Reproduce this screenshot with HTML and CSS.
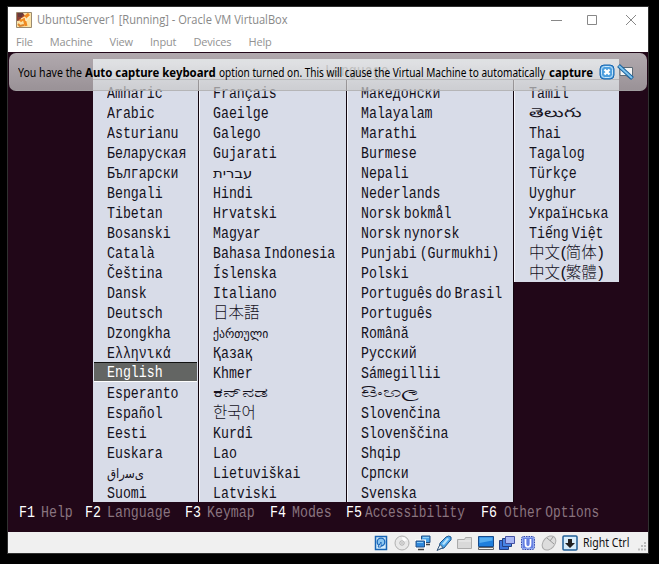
FILE: index.html
```
<!DOCTYPE html>
<html lang="en">
<head>
<meta charset="utf-8">
<title>UbuntuServer1 [Running] - Oracle VM VirtualBox</title>
<link rel="stylesheet" href="styles.css">
</head>
<body>
<div class="window">
  <header class="titlebar">
    <svg class="app-icon" width="16" height="16" viewBox="0 0 16 16"><path d="M.5.5h15v15H.5z" fill="#fbe3a8" stroke="#9a8a70"/><path d="M1 1h6l2 3-3 4-5 1z" fill="#8c3f35"/><path d="M2 2h5M2 4h4" stroke="#413943"/><path d="M4 9l4-3 5-4M8 6l2 8" stroke="#f08a20" stroke-width="3" fill="none"/><path d="M5 7l4-2 1 4 4-5" stroke="#fff3cf" fill="none"/><path d="M2 12l2 2 4-1" stroke="#d9822b" stroke-width="2" fill="none"/></svg>
    <span class="title">UbuntuServer1 [Running] - Oracle VM VirtualBox</span>
    <svg class="controls" width="86" height="12" viewBox="0 0 86 12"><path d="M0 6.500h11M36.500 1.500h9v9h-9zM75 1l10 10M85 1L75 11" fill="none" stroke="#888"/></svg>
  </header>
  <nav class="menubar"><span>File</span><span>Machine</span><span>View</span><span>Input</span><span>Devices</span><span>Help</span></nav>
  <main class="screen">
    <div class="banner">
      <p class="message"><span class="m1">You have the</span><b class="m2">Auto capture keyboard</b><span class="m3">option turned on. This will cause the Virtual Machine to automatically</span><b class="m4">capture</b></p>
      <svg class="banner-icons" width="36" height="18" viewBox="0 0 36 18"><rect x="1" y="2" width="14" height="14" rx="4" fill="#4d9fdf" stroke="#1764af"/><rect x="2.500" y="3.500" width="11" height="11" rx="3" fill="none" stroke="#c9e7fb"/><path d="M5.500 6.500l5 5M10.500 6.500l-5 5" stroke="#fff" stroke-width="2.400"/><path d="M21 4.500h12.500v8H31v3l-4-3h-6z" fill="#f5f5f5" stroke="#5c6a75"/><path d="M19.500 2.500L33.500 15.500" stroke="#17609e" stroke-width="4"/><path d="M20 3l13 12" stroke="#7fc4ee" stroke-width="2"/></svg>
    </div>
    <div class="panel">
      <h1 class="heading"><span class="mono">Language</span></h1>
      <ul class="col c1">
        <li><span class="mono">Amharic</span></li><li><span class="mono">Arabic</span></li><li><span class="mono">Asturianu</span></li><li><span class="mono">Беларуская</span></li><li><span class="mono">Български</span></li><li><span class="mono">Bengali</span></li><li><span class="mono">Tibetan</span></li><li><span class="mono">Bosanski</span></li><li><span class="mono">Català</span></li><li><span class="mono">Čeština</span></li><li><span class="mono">Dansk</span></li><li><span class="mono">Deutsch</span></li><li><span class="mono">Dzongkha</span></li><li><span class="mono">Ελληνικά</span></li><li class="selected"><span class="mono">English</span></li><li><span class="mono">Esperanto</span></li><li><span class="mono">Español</span></li><li><span class="mono">Eesti</span></li><li><span class="mono">Euskara</span></li><li><span class="persian"><bdo dir="ltr">ﻕﺍﺭﺳﯼ</bdo></span></li><li><span class="mono">Suomi</span></li>
      </ul>
      <ul class="col c2">
        <li><span class="mono">Français</span></li><li><span class="mono">Gaeilge</span></li><li><span class="mono">Galego</span></li><li><span class="mono">Gujarati</span></li><li><span class="hebrew"><bdo dir="ltr">תירבע</bdo></span></li><li><span class="mono">Hindi</span></li><li><span class="mono">Hrvatski</span></li><li><span class="mono">Magyar</span></li><li><span class="mono">Bahasa Indonesia</span></li><li><span class="mono">Íslenska</span></li><li><span class="mono">Italiano</span></li><li><span class="cjk">日本語</span></li><li><span class="georgian">ქართული</span></li><li><span class="mono">Қазақ</span></li><li><span class="mono">Khmer</span></li><li><span class="indic kannada">ಕನ್&zwnj;ನಡ</span></li><li><span class="cjk">한국어</span></li><li><span class="mono">Kurdî</span></li><li><span class="mono">Lao</span></li><li><span class="mono">Lietuviškai</span></li><li><span class="mono">Latviski</span></li>
      </ul>
      <ul class="col c3">
        <li><span class="mono">Македонски</span></li><li><span class="mono">Malayalam</span></li><li><span class="mono">Marathi</span></li><li><span class="mono">Burmese</span></li><li><span class="mono">Nepali</span></li><li><span class="mono">Nederlands</span></li><li><span class="mono">Norsk bokmål</span></li><li><span class="mono">Norsk nynorsk</span></li><li><span class="mono">Punjabi (Gurmukhi)</span></li><li><span class="mono">Polski</span></li><li><span class="mono">Português do Brasil</span></li><li><span class="mono">Português</span></li><li><span class="mono">Română</span></li><li><span class="mono">Русский</span></li><li><span class="mono">Sámegillii</span></li><li><span class="indic sinhala">සිංහල</span></li><li><span class="mono">Slovenčina</span></li><li><span class="mono">Slovenščina</span></li><li><span class="mono">Shqip</span></li><li><span class="mono">Српски</span></li><li><span class="mono">Svenska</span></li>
      </ul>
      <ul class="col c4">
        <li><span class="mono">Tamil</span></li><li><span class="indic telugu">తెలుగు</span></li><li><span class="mono">Thai</span></li><li><span class="mono">Tagalog</span></li><li><span class="mono">Türkçe</span></li><li><span class="mono">Uyghur</span></li><li><span class="mono">Українська</span></li><li><span class="mono">Tiếng Việt</span></li><li><span class="cjk">中文<i>(</i>简体<i>)</i></span></li><li><span class="cjk">中文<i>(</i>繁體<i>)</i></span></li>
      </ul>
    </div>
    <footer class="keys">
      <div class="k1"><b class="mono">F1</b><span class="mono">Help</span></div><div class="k2"><b class="mono">F2</b><span class="mono">Language</span></div><div class="k3"><b class="mono">F3</b><span class="mono">Keymap</span></div><div class="k4"><b class="mono">F4</b><span class="mono">Modes</span></div><div class="k5"><b class="mono">F5</b><span class="mono">Accessibility</span></div><div class="k6"><b class="mono">F6</b><span class="mono">Other Options</span></div>
    </footer>
  </main>
  <div class="status">
    <svg viewBox="0 0 16 16"><path d="M2.500 1.500h11v13h-11z" fill="#d5ecfb" stroke="#1764b5" stroke-width="1.500"/><circle cx="8" cy="7" r="3.800" fill="#8cc6f0" stroke="#1b69bc" stroke-width="1.300"/><path d="M8 7l-3 5h3z" fill="#fff" stroke="#1b69bc"/></svg>
    <svg viewBox="0 0 16 16"><circle cx="8" cy="8" r="7" fill="#e8e8e8" stroke="#b0b0b0"/><path d="M8 2a6 6 0 0 1 5 3L9 7z" fill="#fff"/><circle cx="8" cy="8" r="2.200" fill="#f5f5f5" stroke="#aaa"/><circle cx="8" cy="8" r=".7" fill="#888"/></svg>
    <svg viewBox="0 0 16 16"><path d="M6.500 1h8.500v6.500H6.500z" fill="#4ba4e8" stroke="#234f84"/><path d="M11 9.500h4" stroke="#444" stroke-width="1.500"/><path d="M1 6h8.500v6H1z" fill="#2f88dc" stroke="#fff" stroke-width="3"/><path d="M1 6h8.500v6H1z" fill="#2f88dc" stroke="#234f84"/><path d="M3 14.500h6" stroke="#444" stroke-width="1.500"/><path d="M2 7.500h6M8 2.500h6" stroke="#8ccdf6"/></svg>
    <svg viewBox="0 0 16 16"><path d="M4 8l6-6q3-2 5 0 1 3-2 5l-5 6-5 1z" fill="#4da7ea" stroke="#1f568f"/><path d="M6 9l5-6 2 1-5 6z" fill="#b9e3fb"/><path d="M4 9.500l3 3-6 3z" fill="#e8f4fc" stroke="#34567a"/></svg>
    <svg viewBox="0 0 16 16"><path d="M.5 4.500h7l1-2h6v11H.5z" fill="#d9d9d9" stroke="#aaa"/><path d="M2 6h12" stroke="#eee"/></svg>
    <svg viewBox="0 0 16 16"><path d="M.5 1.500h15v10H.5z" fill="#1f7fdd" stroke="#164a8b"/><path d="M1.500 2.500h13v3L1.500 8z" fill="#56adf0"/><path d="M.5 12.500h15v2H.5z" fill="#eee" stroke="#666"/></svg>
    <svg viewBox="0 0 16 16"><path d="M.5 5.500h9v9h-9z" fill="#3a74dc" stroke="#254083"/><path d="M3.500 3.500h9v8h-9z" fill="#4785e4" stroke="#254083"/><path d="M6.500 1.500h9v7h-9z" fill="#a8b7f4" stroke="#4552a5"/></svg>
    <svg viewBox="0 0 16 16"><rect x="1.500" y="1.500" width="13" height="13" rx="2" fill="#90a9ef" stroke="#3446ad" stroke-dasharray="1.500 1"/><path d="M3 3h10v10H3z" fill="#657fe2"/><path d="M5.500 4v5q0 3 2.500 3t2.500-3V4" fill="none" stroke="#fff" stroke-width="1.700"/></svg>
    <svg viewBox="0 0 16 16"><ellipse cx="8" cy="8" rx="8" ry="5.700" transform="rotate(-48 8 8)" fill="#ddd" stroke="#aaa"/><path d="M6 3l7 6M9 6l3-4" stroke="#999" fill="none"/></svg>
    <svg viewBox="0 0 16 16"><rect x="1" y="1" width="14" height="14" rx="1" fill="#d8eefb" stroke="#1f5f98" stroke-width="1.500"/><path d="M6 4h4v4h3l-5 5-5-5h3z" fill="#222"/></svg>
    <span class="host">Right Ctrl</span>
    <svg class="grip" viewBox="0 0 10 10"><path d="M7 1h2M4 4h2M7 4h2M1 7.500h2M4 7.500h2M7 7.500h2" stroke="#bbb" stroke-width="2"/></svg>
  </div>
</div>
</body>
</html>
```
FILE: styles.css
```
* { box-sizing: border-box; }
body { margin: 0; background: #000; width: 659px; height: 564px; overflow: hidden; padding: 6px 0 0 7px; font-family: "Noto Sans", sans-serif; }
.window { width: 642px; height: 548px; border: 1px solid #303030; background: #fff; display: flex; flex-direction: column; }
.titlebar { height: 26px; display: flex; align-items: center; padding: 0 0 1px 8px; flex: none; }
.title { margin-left: 5px; font: 12px "Open Sans", sans-serif; color: #888; white-space: nowrap; width: 251px; transform: scaleX(.925); transform-origin: left; }
.controls { margin-left: 263px; }
.menubar { height: 19px; flex: none; display: flex; gap: 17px; padding: 1px 0 0 8px; font: 11px/16px "Open Sans", sans-serif; color: #929292; letter-spacing: -.15px; }
.screen { height: 480px; flex: none; background: #210718; position: relative; display: flex; flex-direction: column; overflow: hidden; }
.banner { position: absolute; z-index: 2; left: 1px; top: 1px; width: 638px; height: 38px; border-radius: 7px; background: linear-gradient(rgba(230,230,230,.73), rgba(201,201,201,.72)); border-bottom: 1px solid rgba(150,150,150,.6); display: flex; align-items: center; }
.message { margin: 2px 0 0 9px; display: flex; width: 575px; font: 12px/16px "Noto Sans", sans-serif; color: #000; white-space: nowrap; }
.message > * { flex: none; transform-origin: left; }
.m1 { width: 67px; transform: scaleX(.88); }
.m2 { width: 134px; transform: scaleX(.95); }
.m3 { width: 330px; transform: scaleX(.838); }
.m4 { transform: scaleX(.95); }
.banner-icons { margin-left: 6px; }
.panel { margin: 7px 0 0 85px; height: 443px; flex: none; display: grid; grid-template-columns: 106px 148px 167px 105px; grid-template-rows: 21px 422px; }
.heading { grid-column: 1 / -1; margin: 0; background: #dfe3eb; border-bottom: 1px solid #75717c; padding: 3px 0 0 232px; font-size: 16px; font-weight: 400; line-height: 17px; color: #777; }
.col { list-style: none; margin: 0; padding: 4px 0 0; background: #d8dce8; border-right: 1px solid #11050e; overflow: hidden; }
.col + .col { box-shadow: inset 1px 0 #f5f5fa; }
.c4 { height: 202px; border: 0; }
.col li { height: 20px; padding-left: 14px; white-space: nowrap; line-height: 20px; color: #14111c; }
.c4 li { padding-left: 15px; }
.col li.selected { background: #636563; color: #fff; margin: -2px 1px 2px 1px; padding-left: 13px; border-top: 1px solid #111; border-bottom: 1px solid #fff; line-height: 19px; }
.selected .mono { line-height: 21px; }
.col li > span { display: inline-block; vertical-align: top; transform-origin: left; }
.mono { display: inline-block; font: 16px/20px "Liberation Mono", monospace; transform: scaleX(.828); transform-origin: left; word-spacing: -6px; white-space: nowrap; }
.cjk { font: 15.5px/20px "Noto Sans CJK JP", sans-serif; font-weight: 300; transform: translateY(-3px); height: 20px; }
.cjk i { font: 16px/16px "Liberation Mono", monospace; letter-spacing: -3px; margin-left: -1px; }
.hebrew, .persian, .georgian { font: 13px/20px "DejaVu Sans", sans-serif; }
.hebrew { transform: scaleX(1.14); }
.persian { transform: scaleX(.9); }
.georgian { transform: scaleX(.9); }
.indic { font: 13px/16px "Noto Sans", sans-serif; height: 20px; }
.kannada { transform: scaleX(1.7); }
.sinhala { transform: scaleX(1.8); }
.telugu { transform: scaleX(1.45); }
.keys { display: flex; margin: 1px 0 0 11px; }
.keys div { display: flex; flex: none; height: 20px; }
.keys b { width: 22px; font-weight: 400; color: #fff; }
.keys span { color: #89747f; }
.k1 { width: 66px; } .k2 { width: 100px; } .k3 { width: 85px; } .k4 { width: 76px; } .k5 { width: 135px; }
.keys .k5 b, .keys .k6 b { width: 23px; }
.keys .k5 span, .keys .k6 span { transform: scaleX(.8); }
.status { height: 21px; flex: none; background: #f0f0f0; display: flex; align-items: center; padding-left: 365px; gap: 5px; }
.status svg { width: 16px; height: 16px; flex: none; }
.host { font: 12px "Noto Sans", sans-serif; color: #111; white-space: nowrap; width: 46px; transform: scaleX(.88); transform-origin: left; }
.status .grip { width: 10px; height: 10px; margin: 8px 0 0 3px; }
```
